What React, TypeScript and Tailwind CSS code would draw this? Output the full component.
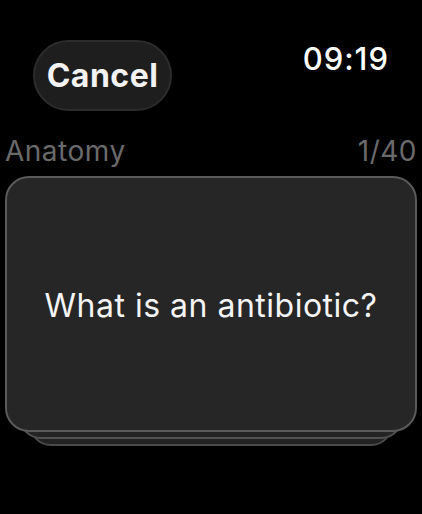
const App = () => {
  return (
    <div className="w-[422px] h-[514px] bg-black overflow-hidden font-['Inter','Noto_Sans',sans-serif] text-white">
      <div className="flex justify-between items-start pl-[33px] pr-[33px] pt-[40px]">
        <button className="h-[71px] w-[139px] rounded-full bg-[#1e1e1e] border-2 border-[#2c2c2c] text-[32px] font-bold tracking-[0.5px] text-[#f2f2f2] leading-none">
          Cancel
        </button>
        <span className="mt-[3px] text-[31px] font-medium leading-none tracking-[1px]">09:19</span>
      </div>

      <div className="flex justify-between items-end px-[5px] mt-[26px] text-[28px] leading-none tracking-[0.5px] text-[#6a6a6a]">
        <span>Anatomy</span>
        <span>1/40</span>
      </div>

      <div className="relative mx-[5px] mt-[11px] h-[270px]">
        <div className="absolute left-[24px] right-[24px] top-[40px] bottom-0 rounded-[22px] bg-[#222222] border-2 border-[#4a4a4a]" />
        <div className="absolute left-[14px] right-[14px] top-[30px] bottom-[7px] rounded-[22px] bg-[#242424] border-2 border-[#525252]" />
        <div className="absolute inset-x-0 top-0 bottom-[14px] rounded-[24px] bg-[#262626] border-2 border-[#5a5a5a] flex items-center justify-center">
          <span className="mt-[4px] text-[32px] text-[#f4f4f4] tracking-[0.5px]">What is an antibiotic?</span>
        </div>
      </div>
    </div>
  );
};

export default App;
